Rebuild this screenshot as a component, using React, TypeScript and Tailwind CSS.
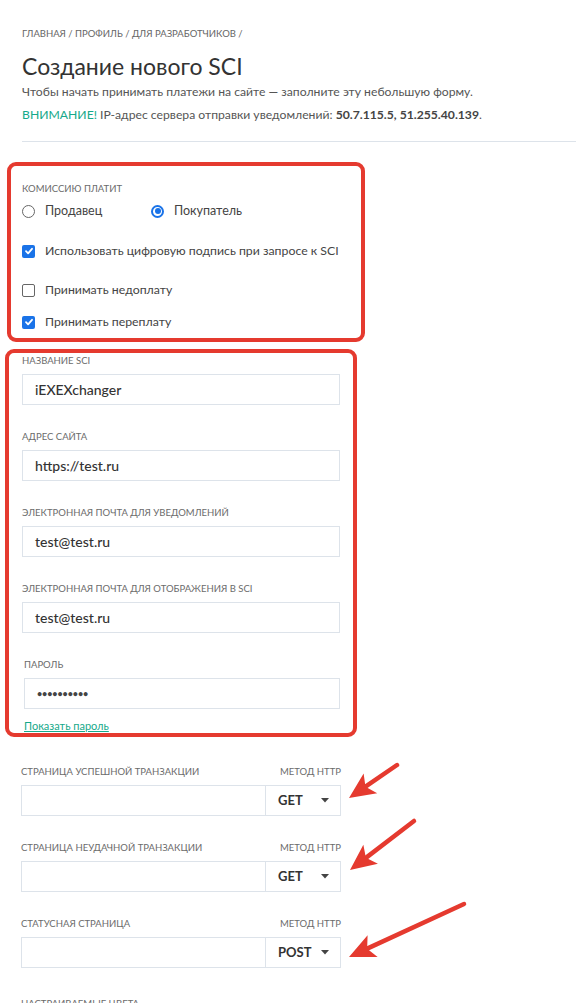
import React from "react";

const RED = "#e53a2f";

function Arrow({ x1, y1, x2, y2 }: { x1: number; y1: number; x2: number; y2: number }) {
  const dx = x2 - x1;
  const dy = y2 - y1;
  const len = Math.hypot(dx, dy);
  const ux = dx / len;
  const uy = dy / len;
  const nx = -uy;
  const ny = ux;
  const hl = 26;
  const hw = 12;
  const bx = x2 - ux * hl;
  const by = y2 - uy * hl;
  const notchX = x2 - ux * (hl - 6);
  const notchY = y2 - uy * (hl - 6);
  const pts = [
    [x2, y2],
    [bx + nx * hw, by + ny * hw],
    [notchX, notchY],
    [bx - nx * hw, by - ny * hw],
  ]
    .map((p) => p.join(","))
    .join(" ");
  return (
    <g>
      <line x1={x1} y1={y1} x2={notchX} y2={notchY} stroke={RED} strokeWidth={4.5} strokeLinecap="round" />
      <polygon points={pts} fill={RED} />
    </g>
  );
}

function Radio({ checked, label }: { checked?: boolean; label: string }) {
  return (
    <div className="flex items-center gap-[10px]">
      {checked ? (
        <span className="flex h-[13px] w-[13px] items-center justify-center rounded-full border-[2px] border-[#1a73e8]">
          <span className="h-[6px] w-[6px] rounded-full bg-[#1a73e8]" />
        </span>
      ) : (
        <span className="h-[13px] w-[13px] rounded-full border-[1.5px] border-[#666]" />
      )}
      <span className="text-[12.5px] leading-[16px] text-[#444]">{label}</span>
    </div>
  );
}

function Checkbox({ checked, label }: { checked?: boolean; label: string }) {
  return (
    <div className="flex items-center gap-[10px]">
      {checked ? (
        <span className="flex h-[13px] w-[13px] items-center justify-center rounded-[2px] bg-[#1a73e8]">
          <svg width="10" height="10" viewBox="0 0 10 10">
            <path d="M2 5.2 L4.1 7.3 L8 2.8" stroke="#fff" strokeWidth="1.8" fill="none" strokeLinecap="round" strokeLinejoin="round" />
          </svg>
        </span>
      ) : (
        <span className="h-[13px] w-[13px] rounded-[2px] border-[1.5px] border-[#666]" />
      )}
      <span className="text-[12.3px] leading-[16px] text-[#444]">{label}</span>
    </div>
  );
}

function Label({ children, className = "" }: { children: React.ReactNode; className?: string }) {
  return <div className={"text-[9.5px] uppercase leading-[12px] text-[#6b6b6b] " + className}>{children}</div>;
}

function Field({ label, value, className = "" }: { label: string; value: string; className?: string }) {
  return (
    <div className={className}>
      <Label>{label}</Label>
      <div className="mt-[7px] flex h-[31px] w-[318px] items-center border border-[#dde3ea] px-[12px] text-[14px] font-medium text-[#333]">
        {value}
      </div>
    </div>
  );
}

function MethodField({ label, method }: { label: string; method: string }) {
  return (
    <div>
      <div className="flex w-[320px] items-end justify-between">
        <Label>{label}</Label>
        <Label>Метод HTTP</Label>
      </div>
      <div className="mt-[7px] flex h-[31px] w-[320px] border border-[#dde3ea]">
        <div className="flex-1" />
        <div className="flex w-[75px] items-center justify-between border-l border-[#dde3ea] pl-[12px] pr-[11px]">
          <span className="text-[13px] font-bold text-[#333]">{method}</span>
          <svg width="8" height="5" viewBox="0 0 8 5">
            <path d="M0 0 H8 L4 4.5 Z" fill="#444" />
          </svg>
        </div>
      </div>
    </div>
  );
}

export default function App() {
  return (
    <div className="relative h-[1003px] overflow-hidden bg-white font-['Lato',sans-serif] text-[#333]">
      <div className="pl-[22px] pt-[28px]">
        <div className="text-[9.5px] uppercase leading-[12px] text-[#666]">Главная / Профиль / Для разработчиков /</div>
        <h1 className="mt-[12px] text-[23px] leading-[28px] text-[#333]">Создание нового SCI</h1>
        <p className="mt-[4px] text-[12.2px] leading-[16px] text-[#555]">
          Чтобы начать принимать платежи на сайте — заполните эту небольшую форму.
        </p>
        <p className="mt-[7px] text-[12.2px] leading-[16px] text-[#555]">
          <span className="text-[#16a98a]">ВНИМАНИЕ!</span> IP-адрес сервера отправки уведомлений:{" "}
          <span className="font-bold text-[#444]">50.7.115.5, 51.255.40.139</span>.
        </p>
        <div className="mt-[18px] border-t border-[#dde3ea]" />

        <div className="mt-[41px]">
          <Label>Комиссию платит</Label>
          <div className="mt-[8px] flex">
            <div className="w-[129px]">
              <Radio label="Продавец" />
            </div>
            <Radio checked label="Покупатель" />
          </div>
          <div className="mt-[24px]">
            <Checkbox checked label="Использовать цифровую подпись при запросе к SCI" />
          </div>
          <div className="mt-[23px]">
            <Checkbox label="Принимать недоплату" />
          </div>
          <div className="mt-[16px]">
            <Checkbox checked label="Принимать переплату" />
          </div>
        </div>

        <div className="mt-[25px]">
          <Field label="Название SCI" value="iEXEXchanger" />
          <Field className="mt-[26px]" label="Адрес сайта" value="https://test.ru" />
          <Field className="mt-[26px]" label="Электронная почта для уведомлений" value="test@test.ru" />
          <Field className="mt-[26px]" label="Электронная почта для отображения в SCI" value="test@test.ru" />
          <div className="mt-[26px] pl-[2px]">
            <Label>Пароль</Label>
            <div className="mt-[7px] flex h-[31px] w-[316px] items-center border border-[#dde3ea] px-[12px] text-[9px] font-bold tracking-[-0.1px] text-[#444]">
              ••••••••••
            </div>
            <a className="mt-[10px] block text-[11px] leading-[14px] text-[#16a98a] underline">Показать пароль</a>
          </div>
        </div>

        <div className="mt-[33px] -ml-[1px]">
          <MethodField label="Страница успешной транзакции" method="GET" />
          <div className="mt-[26px]">
            <MethodField label="Страница неудачной транзакции" method="GET" />
          </div>
          <div className="mt-[26px]">
            <MethodField label="Статусная страница" method="POST" />
          </div>
          <div className="mt-[30px]">
            <Label>Настраиваемые цвета</Label>
          </div>
        </div>
      </div>

      <div className="pointer-events-none absolute left-[7px] top-[162px] h-[180px] w-[358px] rounded-[9px] border-[4px] border-[#e53a2f]" />
      <div className="pointer-events-none absolute left-[5px] top-[349px] h-[388px] w-[352px] rounded-[9px] border-[4px] border-[#e53a2f]" />
      <svg className="pointer-events-none absolute left-0 top-0" width="576" height="1003">
        <Arrow x1={397} y1={765} x2={349} y2={798} />
        <Arrow x1={414} y1={821} x2={350} y2={870} />
        <Arrow x1={464} y1={904} x2={349} y2={957} />
      </svg>
    </div>
  );
}
